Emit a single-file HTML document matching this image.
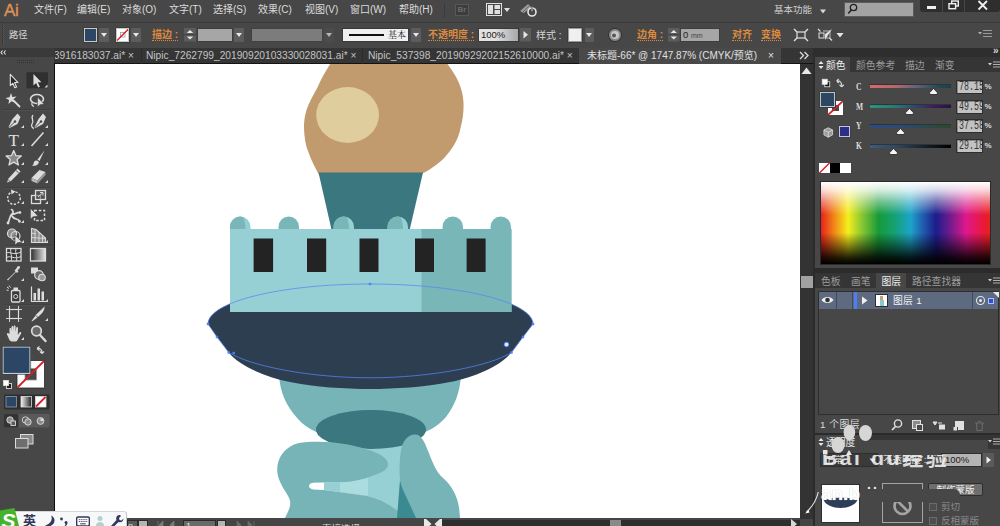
<!DOCTYPE html>
<html lang="zh-CN">
<head>
<meta charset="utf-8">
<title>Adobe Illustrator</title>
<style>
*{box-sizing:border-box;margin:0;padding:0}
html,body{width:1000px;height:526px;overflow:hidden;background:#474747}
body{position:relative;font-family:"Liberation Sans","Noto Sans CJK SC",sans-serif;font-size:12px;color:#d6d6d6}
.abs{position:absolute}
#menubar{position:absolute;left:0;top:0;width:1000px;height:22px;background:#474747}
#menubar span.m{position:absolute;top:2px;font-size:10px;line-height:16px;color:#dcdcdc;white-space:nowrap;letter-spacing:0}
#ctrl{position:absolute;left:0;top:22px;width:1000px;height:26px;background:#474747;border-top:1px solid #3a3a3a}
#ctrl .t{position:absolute;top:5px;font-size:11px;line-height:16px;white-space:nowrap;color:#d6d6d6}
#ctrl .o{color:#dd8a3e;border-bottom:1px dotted #dd8a3e;line-height:11px;top:6px;font-weight:bold}
.dd{position:absolute;background:#5c5c5c;border-radius:1px}
.dd:after{content:"";position:absolute;left:50%;top:50%;margin:-2px 0 0 -3px;border:3px solid transparent;border-top:4px solid #e6e6e6;border-bottom:0}
#tabs{position:absolute;left:0;top:48px;width:1000px;height:16px;background:#353535;border-bottom:1px solid #141414}
#tabs .tb{position:absolute;top:0;height:16px;font-size:10.2px;line-height:15px;color:#c4c4c4;white-space:nowrap;overflow:hidden}
#tools{position:absolute;left:0;top:48px;width:54px;height:478px;background:#474747}
#canvas{position:absolute;left:55px;top:64px;width:745px;height:454px;background:#fff;overflow:hidden}
#vscroll{position:absolute;left:800px;top:64px;width:14px;height:462px;background:#333}
#status{position:absolute;left:54px;top:518.500px;width:760px;height:8px;background:#454545}
#dock{position:absolute;left:813px;top:48px;width:187px;height:478px;background:#2b2b2b}
.panel{position:absolute;left:2px;width:185px;background:#474747}

#dock .tab{position:absolute;top:0;height:15px;overflow:hidden;font-size:9.800px;line-height:17.500px;color:#9c9c9c;white-space:nowrap}
#dock .tab.on{color:#f0f0f0;background:#474747}
.lbl{position:absolute;font-family:"Liberation Serif","Noto Serif CJK SC",serif;font-weight:bold;font-size:10.500px;line-height:12px;color:#dcdcdc;transform:scaleX(.720);transform-origin:0 0}
.sl{position:absolute;left:55px;width:81px;height:4px;border:1px solid #333;border-width:1px 0 0 0}
.th{position:absolute;width:9px;height:7px}
.vf{position:absolute;left:140.500px;width:27px;height:14px;background:#c2c2c2;border:1px solid #2e2e2e;box-shadow:inset 1px 1px 0 #8a8a8a;overflow:hidden;font-family:"Liberation Mono","Noto Sans CJK SC",monospace;font-size:10px;line-height:12px;color:#333;padding-left:2px;white-space:nowrap;letter-spacing:-0.600px}
.pc{position:absolute;left:169.500px;font-size:8px;line-height:12px;color:#dcdcdc;font-weight:bold}
.vf span{display:inline-block;font-size:13px;line-height:12px;transform:scaleX(.640);transform-origin:0 50%;letter-spacing:0}
</style>
</head>
<body>
<div id="menubar">
<span class="abs" style="left:4px;top:0px;font-size:17px;line-height:22px;color:#de9058;-webkit-text-stroke:0.4px #de9058;letter-spacing:-0.3px">Ai</span>
<span class="m" style="left:34px">文件(F)</span>
<span class="m" style="left:77px">编辑(E)</span>
<span class="m" style="left:122px">对象(O)</span>
<span class="m" style="left:169px">文字(T)</span>
<span class="m" style="left:213px">选择(S)</span>
<span class="m" style="left:258px">效果(C)</span>
<span class="m" style="left:305px">视图(V)</span>
<span class="m" style="left:350px">窗口(W)</span>
<span class="m" style="left:399px">帮助(H)</span>
<div class="abs" style="left:444px;top:3px;width:1px;height:15px;background:#3a3a3a"></div>
<div class="abs" style="left:455px;top:4px;width:14px;height:12px;background:#3c3c3c;border:1px solid #585858;font-size:8px;line-height:10px;color:#6a6a6a;text-align:center;font-weight:bold">Br</div>
<svg class="abs" style="left:486px;top:3px" width="26" height="14" viewBox="0 0 26 14"><rect x="0.5" y="0.5" width="15" height="12" fill="none" stroke="#e0e0e0"/><rect x="2" y="2" width="5" height="9" fill="#e0e0e0"/><rect x="8.500" y="2" width="5.500" height="4" fill="#e0e0e0"/><rect x="8.500" y="7" width="5.500" height="4" fill="#e0e0e0"/><path d="M18,5 L24,5 L21,9 Z" fill="#e0e0e0"/></svg>
<svg class="abs" style="left:519px;top:2px" width="20" height="16" viewBox="0 0 20 16"><path d="M1,9 L9,2 L12,5 L5,11 Z" fill="#9a9a9a"/><path d="M3,11 L10,4" stroke="#6a6a6a" stroke-width="1"/><circle cx="13" cy="10" r="4" fill="none" stroke="#e6e6e6" stroke-width="1.600"/><rect x="12.200" y="4.500" width="1.600" height="5" fill="#e6e6e6" stroke="#474747" stroke-width="0.600"/></svg>
<span class="m" style="left:774px;color:#d0d0d0;font-size:9.5px">基本功能</span>
<svg class="abs" style="left:819px;top:9px" width="8" height="5" viewBox="0 0 8 5"><path d="M1,0.500 L7,0.500 L4,4.500 Z" fill="#d8d8d8"/></svg>
<div class="abs" style="left:844px;top:2px;width:70px;height:15px;background:#a3a3a3;border:1px solid #5c5c5c"></div>
<svg class="abs" style="left:847px;top:3px" width="12" height="12" viewBox="0 0 12 12"><circle cx="6.500" cy="4.500" r="3.200" fill="none" stroke="#222" stroke-width="1.300"/><path d="M4.300,7 L1.200,10.500" stroke="#222" stroke-width="1.600"/></svg>
<div class="abs" style="left:920px;top:0;width:80px;height:12px;background:#2e2e2e;border-radius:0 0 3px 3px"></div>
<div class="abs" style="left:942px;top:0;width:1px;height:12px;background:#474747"></div>
<div class="abs" style="left:964px;top:0;width:1px;height:12px;background:#474747"></div>
<div class="abs" style="left:927px;top:6px;width:9px;height:3px;background:#f0f0f0"></div>
<svg class="abs" style="left:948px;top:0" width="12" height="11" viewBox="0 0 12 11"><rect x="3.700" y="1" width="6.600" height="5" fill="none" stroke="#f0f0f0" stroke-width="1.400"/><rect x="1" y="3.700" width="6.600" height="5" fill="#2e2e2e" stroke="#f0f0f0" stroke-width="1.400"/></svg>
<svg class="abs" style="left:977px;top:0" width="12" height="11" viewBox="0 0 12 11"><path d="M1.500,1 L10,9.500 M10,1 L1.500,9.500" stroke="#f0f0f0" stroke-width="1.800"/></svg>
</div>
<div id="ctrl">
<div class="abs" style="left:2px;top:3px;width:2px;height:19px;border-left:1px dotted #2e2e2e;border-right:1px dotted #5a5a5a"></div>
<span class="t" style="left:9px;font-size:9.300px;top:3.500px">路径</span>
<div class="abs" style="left:83.500px;top:5px;width:13.500px;height:13.500px;background:#2c4766;border:1px solid #c8c8c8;box-shadow:0 0 0 0.5px #333"></div>
<div class="dd" style="left:99px;top:5px;width:9.500px;height:13.500px"></div>
<div class="abs" style="left:115.500px;top:5px;width:13.500px;height:13.500px;background:#fff;border:1px solid #c8c8c8;box-shadow:0 0 0 0.5px #333;overflow:hidden"><svg width="11.500" height="11.500" viewBox="0 0 13 13" style="display:block"><rect x="4" y="4" width="5" height="5" fill="none" stroke="#9aa" stroke-width="1"/><path d="M0,13 L13,0" stroke="#d8202a" stroke-width="1.600"/></svg></div>
<div class="dd" style="left:131px;top:5px;width:10px;height:13.500px"></div>
<span class="t o" style="left:152px;font-size:10px">描边 :</span>
<svg class="abs" style="left:184px;top:5px" width="12" height="13.500" viewBox="0 0 11 16" preserveAspectRatio="none"><rect width="11" height="16" fill="#5c5c5c"/><path d="M0,8 H11" stroke="#3a3a3a" stroke-width="1"/><path d="M2.500,6 L8.500,6 L5.500,2.500 Z M2.500,10 L8.500,10 L5.500,13.500 Z" fill="#e6e6e6"/></svg>
<div class="abs" style="left:196.500px;top:5px;width:36.500px;height:13.500px;background:#a6a6a6;border:1px solid #3e3e3e"></div>
<div class="dd" style="left:233.500px;top:5px;width:10px;height:13.500px"></div>
<div class="abs" style="left:250.500px;top:5px;width:72.500px;height:13.500px;background:#7c7c7c;border:1px solid #424242"></div>
<div class="dd" style="left:324px;top:5px;width:10px;height:13.500px;background:#4e4e4e;opacity:.7"></div>
<div class="abs" style="left:342px;top:5px;width:67px;height:13.500px;background:#f0f0f0;border:1px solid #3a3a3a"><div class="abs" style="left:6px;top:5px;width:35px;height:2px;background:#111"></div><span class="abs" style="left:45px;top:-1.500px;font-size:9px;line-height:14px;color:#222;font-family:'Liberation Serif','Noto Serif CJK SC',serif">基本</span></div>
<div class="dd" style="left:411px;top:5px;width:10px;height:13.500px"></div>
<span class="t o" style="left:428px;font-size:10px">不透明度 :</span>
<div class="abs" style="left:478px;top:5px;width:41px;height:13.500px;background:linear-gradient(90deg,#e2e2e2 40%,#a8a8a8);border:1px solid #3a3a3a;font-size:9.5px;line-height:11px;color:#222;padding-left:2px">100%</div>
<svg class="abs" style="left:520px;top:5px" width="11" height="13.500" viewBox="0 0 11 13" preserveAspectRatio="none"><rect width="11" height="13" fill="#5c5c5c"/><path d="M3.500,3 L8,6.500 L3.500,10 Z" fill="#e6e6e6"/></svg>
<span class="t" style="left:536px;font-size:10px">样式 :</span>
<div class="abs" style="left:568px;top:5px;width:14px;height:13.500px;background:#efefef;border:1px solid #9a9a9a;box-shadow:0 0 0 0.5px #333"></div>
<div class="dd" style="left:584.500px;top:5px;width:9.500px;height:13.500px"></div>
<svg class="abs" style="left:607px;top:4px" width="16" height="16" viewBox="0 0 16 16"><circle cx="8" cy="8" r="6.500" fill="#8a8a8a" stroke="#2e2e2e" stroke-width="1"/><circle cx="8" cy="8" r="4" fill="#c8c8c8"/><circle cx="7" cy="8.500" r="2" fill="#555"/></svg>
<span class="t o" style="left:637px;font-size:10px">边角 :</span>
<svg class="abs" style="left:668px;top:5px" width="11.500" height="13.500" viewBox="0 0 11 16" preserveAspectRatio="none"><rect width="11" height="16" fill="#5c5c5c"/><path d="M0,8 H11" stroke="#3a3a3a" stroke-width="1"/><path d="M2.500,6 L8.500,6 L5.500,2.500 Z M2.500,10 L8.500,10 L5.500,13.500 Z" fill="#e6e6e6"/></svg>
<div class="abs" style="left:680px;top:5px;width:40px;height:13.500px;background:#a6a6a6;border:1px solid #3e3e3e;font-size:9.500px;line-height:11px;color:#222;padding-left:2px">0 <span style="font-size:7px;color:#444">mm</span></div>
<span class="t o" style="left:732px;font-size:10px">对齐</span>
<span class="t o" style="left:761px;font-size:10px">变换</span>
<svg class="abs" style="left:793px;top:5px" width="16" height="14" viewBox="0 0 16 14"><rect x="4" y="4" width="8" height="6" fill="none" stroke="#e0e0e0" stroke-width="1.200"/><path d="M1,1 L4,4 M15,1 L12,4 M1,13 L4,10 M15,13 L12,10" stroke="#e0e0e0" stroke-width="1.400"/></svg>
<svg class="abs" style="left:817px;top:5px" width="28" height="14" viewBox="0 0 28 14"><rect x="2" y="5" width="5" height="5" fill="none" stroke="#e0e0e0" stroke-width="1"/><path d="M6,3 L13,3 L13,10 L9,10" fill="none" stroke="#bdbdbd" stroke-width="1"/><path d="M15,1 L8,12 L8,6 Z" fill="#e0e0e0"/><path d="M1,1 L3.500,3.500 M15,12.500 L12.500,10" stroke="#e0e0e0" stroke-width="1.200"/><path d="M19.500,5 L26.500,5 L23,9.500 Z" fill="#e6e6e6"/></svg>
<svg class="abs" style="left:978px;top:6px" width="14" height="10" viewBox="0 0 14 10"><path d="M0,3 L4,3 L2,5.500 Z" fill="#b0b0b0"/><path d="M5,1.500 H14 M5,4.500 H14 M5,7.500 H14" stroke="#9a9a9a" stroke-width="1"/></svg>
</div>
<div id="tabs">
<div class="abs" style="left:0;top:0;width:54px;height:16px;background:#3a3a3a"></div>
<span class="abs" style="left:2px;top:1px;font-size:8px;line-height:8px;color:#d0d0d0;letter-spacing:-1.5px;font-weight:bold">‹‹</span>
<div class="abs" style="left:18px;top:10px;width:18px;height:3px;border-top:1px dotted #6a6a6a;border-bottom:1px dotted #6a6a6a"></div>
<div class="tb" style="left:55px;width:79px;direction:rtl"><span style="direction:ltr;unicode-bidi:bidi-override;float:right">3916183037.ai* ×</span></div>
<div class="abs" style="left:141px;top:1px;width:1px;height:15px;background:#2a2a2a"></div>
<div class="tb" style="left:146px;width:215px"><span>Nipic_7262799_20190920103330028031.ai* ×</span></div>
<div class="abs" style="left:362px;top:1px;width:1px;height:15px;background:#2a2a2a"></div>
<div class="tb" style="left:368px;width:210px"><span>Nipic_537398_20190929202152610000.ai* ×</span></div>
<div class="abs" style="left:579px;top:0;width:202px;height:16px;background:#494949"></div>
<div class="tb" style="left:587px;width:175px;color:#e0e0e0;font-size:10px"><span>未标题-66* @ 1747.87% (CMYK/预览)</span></div>
<div class="tb" style="left:768px;width:10px;color:#e0e0e0">×</div>
<svg class="abs" style="left:799px;top:3px" width="10" height="9" viewBox="0 0 10 9"><path d="M1,1 L4.500,4.500 L1,8 M5.500,1 L9,4.500 L5.500,8" fill="none" stroke="#dcdcdc" stroke-width="1.300"/></svg>
</div>
<div id="tools">
<svg width="54" height="478" viewBox="0 48 54 478" style="position:absolute;left:0;top:0">
<rect x="0" y="48" width="54" height="9" fill="#3a3a3a"/>

<path d="M2.500,50.500 L1,52.500 L2.500,54.500 M5.500,50.500 L4,52.500 L5.500,54.500" fill="none" stroke="#e0e0e0" stroke-width="1.100"/>
<path d="M17,60.500 H34 M17,62.500 H34" stroke="#333" stroke-width="1" stroke-dasharray="1 1"/>
<g stroke-width="1">
<path d="M3,109.500 H51 M3,187.500 H51 M3,245.500 H51 M3,304.500 H51" stroke="#3f3f3f"/>
<path d="M3,110.500 H51 M3,188.500 H51 M3,246.500 H51 M3,305.500 H51" stroke="#4f4f4f"/>
</g>
<!-- row1 -->
<rect x="26.500" y="72.300" width="21.500" height="16" rx="1" fill="#303030"/>
<path transform="translate(14,81) scale(.86) translate(-14.300,-81.200)" d="M10,73.500 L10,86.500 L13,83.800 L15.300,89 L17.300,88.100 L15,83 L19,83 Z" fill="#2a2a2a" stroke="#e0e0e0" stroke-width="1.300" stroke-linejoin="round"/>
<path transform="translate(37.300,80.700) scale(.86) translate(-38,-81.400)" d="M33.500,73.500 L33.500,87 L36.600,84 L39,89.300 L41,88.400 L38.600,83.200 L42.800,83.200 Z" fill="#dedede"/>
<g fill="#d8d8d8">
<path d="M47.500,84.500 L47.500,87.500 L44.500,87.500 Z"/>
<path d="M48,104 L48,107 L45,107 Z" opacity="0"/>
<path d="M24,125 L24,128 L21,128 Z"/><path d="M48,125 L48,128 L45,128 Z"/>
<path d="M24,143 L24,146 L21,146 Z"/><path d="M48,143 L48,146 L45,146 Z"/>
<path d="M24,162 L24,165 L21,165 Z"/><path d="M48,162 L48,165 L45,165 Z"/>
<path d="M24,180 L24,183 L21,183 Z"/><path d="M48,180 L48,183 L45,183 Z"/>
<path d="M24,201 L24,204 L21,204 Z"/><path d="M48,201 L48,204 L45,204 Z"/>
<path d="M24,220 L24,223 L21,223 Z"/>
<path d="M24,240 L24,243 L21,243 Z"/><path d="M48,240 L48,243 L45,243 Z"/>
<path d="M24,278 L24,281 L21,281 Z"/>
<path d="M24,299 L24,302 L21,302 Z"/><path d="M48,299 L48,302 L45,302 Z"/>
<path d="M48,318 L48,321 L45,321 Z"/>
<path d="M24,337 L24,340 L21,340 Z"/>
</g>
<!-- row2 magic wand / lasso -->
<path d="M11,93 L12.300,97 L16.500,96.500 L13.500,99.300 L15.500,103 L11.500,101.200 L8.500,104 L9,100 L5.500,98 L9.500,97.200 Z" fill="#dcdcdc"/>
<path d="M13.500,100.500 L20,107" stroke="#dcdcdc" stroke-width="1.800"/>
<ellipse cx="37" cy="99" rx="6.500" ry="4.500" fill="none" stroke="#dcdcdc" stroke-width="1.600"/>
<path d="M32.500,102 C31,104 32,106 34,106.500" fill="none" stroke="#dcdcdc" stroke-width="1.200"/>
<path d="M37.500,97 L37.500,107 L40,104.800 L44,104 Z" fill="#dcdcdc" stroke="#474747" stroke-width="0.600"/>
<!-- row3 pen / curvature -->
<path d="M17.500,113.500 L20.500,117 L17.500,124 L9.500,128 L8.500,127 L12.500,119 Z" fill="#dcdcdc"/>
<path d="M9,127.500 L14.500,122" stroke="#474747" stroke-width="1"/>
<circle cx="15" cy="121.500" r="1.200" fill="#474747"/>
<path d="M43,113.500 L46,117 L43,124 L35.500,128 L34.500,127 L38.500,119 Z" fill="#dcdcdc"/>
<path d="M35,127.500 L40.500,122" stroke="#474747" stroke-width="1"/>
<circle cx="41" cy="121.500" r="1.200" fill="#474747"/>
<path d="M33,115 C30,118 35,121 32,124 C31,126 32,128 34,128.500" fill="none" stroke="#dcdcdc" stroke-width="1.300"/>
<!-- row4 T / line -->
<text x="13.700" y="145.500" font-family="'Liberation Serif',serif" font-size="17" fill="#e0e0e0" text-anchor="middle">T</text>
<path d="M31.500,146 L43.500,132.500" stroke="#dcdcdc" stroke-width="1.600"/>
<!-- row5 star / brush -->
<path d="M13.700,150.500 L15.800,155.600 L21.300,156 L17.100,159.600 L18.400,165 L13.700,162.100 L9,165 L10.300,159.600 L6.100,156 L11.600,155.600 Z" fill="#8a8a8a" stroke="#dcdcdc" stroke-width="1.300" stroke-linejoin="round"/>
<path d="M44.500,150.500 L37.500,159.500 L39.500,161 Z" fill="#dcdcdc"/>
<path d="M37,160.500 C35,160 33.500,162 33.500,164 C33,165 32,165.500 31.500,165.500 C34,166.500 38.500,165.500 39,162 Z" fill="#dcdcdc"/>
<!-- row6 pencil / eraser -->
<path d="M17.500,168.500 L20.500,171.500 L11,181 L7,182.500 L8.500,178.500 Z" fill="#dcdcdc"/>
<path d="M15.800,170.200 L18.800,173.200" stroke="#474747" stroke-width="0.900"/>
<path d="M8,179.500 L10,181.500" stroke="#474747" stroke-width="0.800"/>
<path d="M31.500,178 L39.500,170 L45.500,172 L37.500,180.500 Z" fill="#dcdcdc"/>
<path d="M31.500,178 L37.500,180.500 L37.500,183.500 L31.500,181 Z" fill="#b8b8b8"/>
<path d="M37.500,180.500 L45.500,172 L45.500,175 L37.500,183.500 Z" fill="#9a9a9a"/>
<!-- row7 rotate / scale -->
<circle cx="14" cy="198" r="6.300" fill="none" stroke="#dcdcdc" stroke-width="1.400" stroke-dasharray="2.200 1.600"/>
<path d="M11,189.500 L15.500,191.500 L11.500,194.500 Z" fill="#dcdcdc"/>
<rect x="31.500" y="195.500" width="9" height="8" fill="none" stroke="#dcdcdc" stroke-width="1.300"/>
<rect x="35.500" y="190.500" width="10" height="9" fill="#5a5a5a" fill-opacity="0.600" stroke="#dcdcdc" stroke-width="1.300"/>
<path d="M38,197 L43,192.500 M43,192.500 L40,192.500 M43,192.500 L43,195.500" stroke="#dcdcdc" stroke-width="1"/>
<!-- row8 width / free transform -->
<path d="M8,223 C10,220 9,216 12,214 C14,212.500 13,210 11.500,209.500 M12,214 C15,215 17,212 20,212.500 M12,216 C14,220 18,218 19.500,221" fill="none" stroke="#dcdcdc" stroke-width="1.700" stroke-linecap="round"/>
<circle cx="8" cy="223" r="1.400" fill="#dcdcdc"/><circle cx="20" cy="212.500" r="1.300" fill="#dcdcdc"/><circle cx="19.500" cy="221.500" r="1.300" fill="#dcdcdc"/>
<rect x="34.500" y="210.500" width="10" height="10" fill="none" stroke="#dcdcdc" stroke-width="1.500" stroke-dasharray="2.500 1.800"/>
<path d="M30.500,208.500 L30.500,219 L33,216.800 L38,216 Z" fill="#dcdcdc" stroke="#474747" stroke-width="0.500"/>
<!-- row9 shape builder / perspective grid -->
<circle cx="12" cy="233.500" r="4.500" fill="#8a8a8a" stroke="#dcdcdc" stroke-width="1.200"/>
<circle cx="15.500" cy="236" r="4.500" fill="none" stroke="#dcdcdc" stroke-width="1.200"/>
<path d="M15,235 L15,245 L17.500,242.800 L22,242 Z" fill="#dcdcdc" stroke="#474747" stroke-width="0.600"/>
<path d="M31.500,228.500 L31.500,242.500 L45.500,242.500 L45.500,238 L36,229.500 Z" fill="#8a8a8a" stroke="#dcdcdc" stroke-width="1.100"/>
<path d="M35,229 L35,242.500 M39,232 L39,242.500 M42.500,235 L42.500,242.500 M31.500,233 L36,234 M31.500,237.500 L45,238.500" stroke="#dcdcdc" stroke-width="0.900"/>
<!-- row10 mesh / gradient -->
<rect x="6.500" y="248.500" width="14.500" height="12.500" fill="#3a3a3a" stroke="#dcdcdc" stroke-width="1.300"/>
<path d="M6.500,253 C10,251 13,256 21,252 M6.500,257.500 C11,255 14,260 21,256.500 M11,248.500 C9.500,253 13,256 11,261 M16,248.500 C14.500,253 18,256 16.500,261" fill="none" stroke="#dcdcdc" stroke-width="1"/>
<defs><linearGradient id="tg" x1="0" y1="0" x2="1" y2="0"><stop offset="0" stop-color="#2a2a2a"/><stop offset="1" stop-color="#e6e6e6"/></linearGradient>
<linearGradient id="tg2" x1="0" y1="0" x2="1" y2="0"><stop offset="0" stop-color="#f4f4f4"/><stop offset="1" stop-color="#222"/></linearGradient></defs>
<rect x="30.500" y="248.500" width="15" height="12.500" fill="url(#tg)" stroke="#dcdcdc" stroke-width="1.300"/>
<!-- row11 eyedropper / blend -->
<path d="M17.500,266.500 C19,265 21,267 19.500,268.500 L17.500,270.500 L18.500,271.500 L17,273 L16,272 L10,278 L8,280.500 L7,279.500 L9.500,277.500 L15.500,271.500 L14.500,270.500 L16,269 Z" fill="#dcdcdc"/>
<rect x="31" y="267.500" width="7" height="6" fill="#dcdcdc"/>
<circle cx="39" cy="275" r="4.300" fill="#6a6a6a" stroke="#dcdcdc" stroke-width="1.200"/>
<circle cx="42" cy="277.500" r="3.300" fill="#9a9a9a" stroke="#dcdcdc" stroke-width="1.100"/>
<!-- row12 symbol sprayer / graph -->
<rect x="11.500" y="290.500" width="8.500" height="11.500" rx="1.200" fill="#3a3a3a" stroke="#dcdcdc" stroke-width="1.300"/>
<rect x="13.500" y="287.500" width="4.500" height="3" fill="#dcdcdc"/>
<circle cx="15.700" cy="296.500" r="2" fill="none" stroke="#dcdcdc" stroke-width="1"/>
<path d="M7,287 L9,288.500 M6.500,290 L8.500,290.500 M9,285.500 L10.500,287.500" stroke="#dcdcdc" stroke-width="1"/>
<path d="M31.500,286.500 L31.500,301.500 L46,301.500" fill="none" stroke="#dcdcdc" stroke-width="1.200"/>
<rect x="33.500" y="293" width="2.500" height="7.500" fill="#dcdcdc"/><rect x="37.500" y="288.500" width="2.500" height="12" fill="#dcdcdc"/><rect x="41.500" y="291.500" width="2.500" height="9" fill="#dcdcdc"/>
<!-- row13 artboard / slice -->
<rect x="9.500" y="309.500" width="9" height="9" fill="none" stroke="#dcdcdc" stroke-width="1.200"/>
<path d="M6,309.500 H22 M6,318.500 H22 M9.500,306 V322 M18.500,306 V322" stroke="#dcdcdc" stroke-width="0.900"/>
<path d="M44.500,306.500 C45,310 42,314 38,317 L35.500,315 C39,312 42,309 44.500,306.500 Z" fill="#dcdcdc"/>
<path d="M35.500,315.500 L37.500,317.500 L32,321.500 L31.500,321 Z" fill="#dcdcdc"/>
<!-- row14 hand / zoom -->
<path d="M9.500,334 L9.500,329 C9.500,327.500 11.300,327.500 11.300,329 L11.500,332 L11.500,327 C11.500,325.500 13.300,325.500 13.300,327 L13.500,331.500 L13.700,326.500 C13.700,325 15.500,325 15.500,326.500 L15.700,332 L16.200,328 C16.300,326.600 18,326.800 18,328.300 L17.800,335 L19.500,332.500 C20.300,331.500 21.800,332.300 21,333.700 L17.500,340 C17,341 16,341.500 15,341.500 L12,341.500 C10.500,341.500 9.500,340.500 9,339 L7,334.500 C6.500,333 8.200,332.300 8.800,333.500 Z" fill="#dcdcdc"/>
<circle cx="36.500" cy="331" r="4.800" fill="#6a6a6a" stroke="#dcdcdc" stroke-width="1.700"/>
<path d="M40,335 L45.500,341" stroke="#dcdcdc" stroke-width="2.400" stroke-linecap="round"/>
<!-- fill / stroke -->
<rect x="17" y="360.500" width="27.500" height="27.500" fill="#fff" stroke="#2a2a2a" stroke-width="0.800"/>
<rect x="25" y="368.500" width="11.500" height="11.500" fill="#474747" stroke="#9a9a9a" stroke-width="0.800"/>
<path d="M17.500,387.500 L44,361" stroke="#d8202a" stroke-width="1.800"/>
<rect x="3" y="347" width="27" height="26.500" fill="#2c4766" stroke="#c4ccd4" stroke-width="1.200"/>
<rect x="2.200" y="346.200" width="28.600" height="28.100" fill="none" stroke="#333" stroke-width="0.600"/>
<path d="M37,348.500 C40,348 42,349.500 42,352.500 M37,348.500 L39.500,346.500 M37,348.500 L39.500,350.500 M42,353.500 L40,351.500 M42,353.500 L44,351.500" fill="none" stroke="#dcdcdc" stroke-width="1.200"/>
<rect x="6.500" y="383.500" width="5" height="5" fill="#222" stroke="#dcdcdc" stroke-width="0.900"/>
<rect x="3.500" y="380.500" width="5" height="5" fill="#fff" stroke="#dcdcdc" stroke-width="0.900"/>
<!-- color mode buttons -->
<rect x="4" y="394.500" width="45.500" height="15" rx="1.500" fill="#2e2e2e"/>
<rect x="6" y="396.500" width="10.500" height="10.500" fill="#2c4766" stroke="#8a9aac" stroke-width="0.800"/>
<rect x="21" y="396.500" width="10.500" height="10.500" fill="url(#tg2)" stroke="#dcdcdc" stroke-width="0.800"/>
<rect x="35.500" y="396.500" width="10.500" height="10.500" fill="#fff" stroke="#dcdcdc" stroke-width="0.800"/>
<path d="M36,406.500 L45.500,397" stroke="#d8202a" stroke-width="1.800"/>
<!-- draw modes -->
<rect x="4" y="414" width="45.500" height="13.500" rx="1.500" fill="#5a5a5a"/>
<rect x="4" y="414" width="14.500" height="13.500" rx="1.500" fill="#333"/>
<circle cx="10" cy="420" r="3.200" fill="#8a8a8a" stroke="#dcdcdc" stroke-width="0.900"/><rect x="11" y="421" width="4.500" height="4.500" fill="#5a5a5a" stroke="#dcdcdc" stroke-width="0.900"/>
<circle cx="25.500" cy="420" r="3.200" fill="none" stroke="#dcdcdc" stroke-width="0.900"/><circle cx="28" cy="422" r="3.200" fill="#8a8a8a" stroke="#dcdcdc" stroke-width="0.900"/>
<circle cx="40.500" cy="421" r="3.400" fill="#8a8a8a" stroke="#dcdcdc" stroke-width="0.900"/><path d="M40.500,421 L40.500,418 A3,3 0 0 1 43.500,421 Z" fill="#dcdcdc"/>
<!-- screen mode -->
<rect x="20.500" y="434.500" width="12.500" height="9.500" fill="#8a8a8a" stroke="#dcdcdc" stroke-width="1"/>
<rect x="15.500" y="438.500" width="12.500" height="9.500" fill="#6e6e6e" stroke="#dcdcdc" stroke-width="1"/>
</svg>
</div>
<div class="abs" style="left:53.500px;top:64px;width:2px;height:455px;background:#0c0c0c"></div>
<div id="canvas">
<svg width="745" height="454" viewBox="55 64 745 454" style="position:absolute;left:0;top:0">
<!-- flame -->
<path d="M334.500,58 C329,65 322,77 317.400,87.400 C313,96 309,102 306.500,110 C304.500,117 303.800,123 304,128 C304.300,138 306,146 308,151 C311,160 315,167 318.5,174 L421,174 C427,171.500 432,168 436,165 C442,161 446,156 450,151 C456,143 459,136 460.500,128 C463,119 464,110 463.400,101 C463,94 461,88 459,83 C456,76 452,70 446,62 L444,58 Z" fill="#c19b6d"/>
<ellipse cx="347.600" cy="115" rx="31.400" ry="28" fill="#e0cd9e"/>
<!-- torch cup -->
<path d="M318.500,172.500 L423,172.500 L409.600,230 L331.600,230 Z" fill="#3a777f"/>
<!-- lower bowl -->
<path d="M279,375 C280,392 286,406 298,419 C306,428 316,433 330,436 L415,436 C428,432 438,426 446,417 C455,405 460,392 461,375 Z" fill="#76b4b7"/>
<!-- dish -->
<path d="M208,324 C208,302 280,284 370,284 C460,284 533,302 533,324 L523,337 L511,353 C500,366 475,377 450,382 C425,387 395,389 370,389 C345,389 315,387 290,382 C265,377 240,366 229,353 L217,337 Z" fill="#2c3e50"/>
<!-- merlons -->
<path d="M230,240 L230,227 a10.250,10.500 0 0 1 20.500,0 L250.5,240 Z" fill="#96d0d4"/>
<path d="M230,240 L230,227 a10.250,10.500 0 0 1 13,-10 C245,220 246,228 246,240 Z" fill="#78b6b7"/>
<path d="M278.5,240 L278.5,227 a10.250,10.500 0 0 1 20.500,0 L299,240 Z" fill="#78b6b7"/>
<path d="M333.5,240 L333.5,227 a10.250,10.500 0 0 1 20.500,0 L354,240 Z" fill="#96d0d4"/>
<path d="M333.5,240 L333.5,227 a10.250,10.500 0 0 1 13,-10 C348.5,220 349.5,228 349.5,240 Z" fill="#78b6b7"/>
<path d="M387.5,240 L387.5,227 a10.250,10.500 0 0 1 20.500,0 L408,240 Z" fill="#96d0d4"/>
<path d="M387.5,240 L387.5,227 a10.250,10.500 0 0 1 13,-10 C402.5,220 403.5,228 403.5,240 Z" fill="#78b6b7"/>
<path d="M442.5,240 L442.5,227 a10.250,10.500 0 0 1 20.500,0 L463,240 Z" fill="#78b6b7"/>
<path d="M490.5,240 L490.5,227 a10.250,10.500 0 0 1 20.500,0 L511,240 Z" fill="#78b6b7"/>
<!-- castle body -->
<rect x="230" y="229" width="281.500" height="83" fill="#96d0d4"/>
<rect x="421.500" y="229" width="90" height="83" fill="#78b6b7"/>
<g fill="#232323">
<rect x="253.600" y="238.500" width="19.500" height="33.500"/>
<rect x="307" y="238.500" width="19.200" height="33.500"/>
<rect x="359.500" y="238.500" width="19" height="33.500"/>
<rect x="415" y="238.500" width="19" height="33.500"/>
<rect x="466.600" y="238.500" width="19" height="33.500"/>
</g>
<!-- stem -->
<path d="M366,445 L403,445 L400,518 L384,518 Z" fill="#96d0d4"/>
<!-- horn -->
<path d="M309,486 C309,483.500 312,482.500 316,482.500 L345,482 C356,481 364,478 370,470 L402,470 L398,511 C388,504 378,498 368,496 L324,490 L316,489.800 C312,489.800 309,488.500 309,486 Z" fill="#96d0d4"/>
<path d="M340,482.200 L345,482 C354,481.300 362,479 368,473 L368,496 L340,492.200 Z" fill="#abdcde"/>
<path d="M309,486 C309,483.500 312,482.500 316,482.500 L324,482.400 L324,490 L316,489.800 C312,489.800 309,488.500 309,486 Z" fill="#fff"/>
<!-- dark teal ellipse -->
<ellipse cx="371" cy="429.500" rx="55" ry="19.500" fill="#3a777f"/>
<!-- hand/finger -->
<path d="M285,518 C287,514 290.300,508 290.300,503 C290.300,499 288,496 286,492.500 C282,486 277,478 277.200,469 C277.500,458 284,449 294,444.500 C300,442.300 308,441.800 318,441.800 C340,442 358,446 372,451 C382,455 388,459 388,464 C388,469 383,472 377,474 C368,478 356,481.500 345,482 L316,482.500 C312,482.500 309,483.500 309,486 C309,488.500 312,489.800 316,489.800 L324,490 L368,496 C378,498 388,504 398,511 L402,518 Z" fill="#76b4b7"/>
<!-- shade -->
<path d="M400,480 L417,518 L397,518 L398,505 Z" fill="#3b8a92"/>
<!-- thumb -->
<path d="M414,434.500 C408,435 403,441 401.500,448 C400,455 399.500,466 399.500,472 C399.500,480 401,486 404,492 L416,518 L460,518 C459.500,510 459,503 455,494 C452,488 449,483 443,478 C436,472 432,461 428.500,452 C426,446 424,439.500 419,435.500 C417.500,434.600 416,434.300 414,434.500 Z" fill="#76b4b7"/>
<!-- selection outline -->
<g fill="none" stroke="#5585f5" stroke-width="0.75">
<path d="M208,324 C208,302 280,284 370,284 C460,284 533,302 533,324 L523,337 L511.500,352.500 C490,366 430,377.800 370,377.800 C310,377.800 250,366 229,352.500 L217,337 Z"/>
</g>
<g fill="#4f80ff">
<rect x="368.800" y="282.800" width="2.400" height="2.400"/>
<rect x="206.800" y="322.800" width="2.400" height="2.400"/>
<rect x="531.800" y="322.800" width="2.400" height="2.400"/>
<rect x="215.800" y="335.800" width="2.400" height="2.400"/>
<rect x="521.800" y="335.800" width="2.400" height="2.400"/>
<rect x="227.500" y="351.300" width="2.400" height="2.400"/>
<rect x="510.300" y="351.300" width="2.400" height="2.400"/>
<rect x="232.500" y="351.800" width="2.400" height="2.400"/>
</g>
<circle cx="506.500" cy="344.500" r="2.300" fill="#dfe8ff" stroke="#4f80ff" stroke-width="0.800"/>
</svg>
</div>
<div id="vscroll">
<svg class="abs" style="left:1px;top:2px" width="11" height="9" viewBox="0 0 11 9"><path d="M0.500,8 L5.500,1.500 L10.500,8 Z" fill="#e8e8e8"/></svg>
<div class="abs" style="left:0.500px;top:212px;width:12px;height:12px;background:#a2a2a2"></div>
<div class="abs" style="left:1px;top:455px;width:12px;height:8px;background:#4c4c4c"></div>
</div>
<div id="status">
<div class="abs" style="left:73px;top:1px;width:11px;height:8px;background:#5a5a5a;border:1px solid #2a2a2a;font-size:9px;line-height:12px;color:#ddd;overflow:hidden">8</div>
<div class="abs" style="left:84px;top:1px;width:10px;height:8px;background:#b4b4b4;border:1px solid #2a2a2a"></div>
<svg class="abs" style="left:101px;top:2px" width="24" height="6" viewBox="0 0 24 6"><path d="M3,0 V6 M8,0 L4,4 L8,8 Z M19,0 L15,4 L19,8 Z" fill="#7a7a7a" stroke="#7a7a7a" stroke-width="0.800"/></svg>
<div class="abs" style="left:129px;top:1px;width:33px;height:8px;background:#6a6a6a;border:1px solid #2a2a2a;font-size:9px;line-height:11px;color:#e8e8e8;overflow:hidden;padding-left:2px">1</div>
<div class="abs" style="left:163px;top:1px;width:9px;height:8px;background:#b4b4b4;border:1px solid #2a2a2a"></div>
<svg class="abs" style="left:180px;top:2px" width="24" height="6" viewBox="0 0 24 6"><path d="M3,0 L7,4 L3,8 Z M14,0 L18,4 L14,8 Z M20,0 V6" fill="#6a6a6a" stroke="#6a6a6a" stroke-width="0.800"/></svg>
<div class="abs" style="left:268px;top:4.500px;width:40px;height:4px;overflow:hidden;font-size:9.500px;line-height:12px;color:#dcdcdc;white-space:nowrap">直接选择</div>
<svg class="abs" style="left:368px;top:0" width="22" height="8" viewBox="0 0 22 8"><path d="M2,-2 L9.500,5 L2,12 Z" fill="#e8e8e8"/><path d="M20,-2 L12.500,5 L20,12 Z" fill="#e8e8e8"/></svg>
<div class="abs" style="left:388px;top:1px;width:358px;height:7px;background:#2e2e2e"></div>
<div class="abs" style="left:556px;top:1px;width:11px;height:7px;background:#8a8a8a"></div>
<svg class="abs" style="left:734px;top:0" width="10" height="8" viewBox="0 0 10 8"><path d="M3,0 L9,5 L3,10 Z" fill="#d8d8d8"/></svg>
</div>
<div id="ime" class="abs" style="left:0;top:507px;width:127px;height:19px;overflow:hidden">
<div class="abs" style="left:0;top:4px;width:127px;height:15px;background:#f6f8fa;border-top:1px solid #d4d8dc;border-right:1px solid #c4c8cc;border-radius:0 3px 0 0"></div>
<svg class="abs" style="left:0;top:0" width="22" height="19" viewBox="0 0 22 19"><path d="M0,3.500 L14.500,1 L19,19 L0,19 Z" fill="#44b32c"/><text x="8.500" y="20.500" font-family="'Liberation Sans',sans-serif" font-size="21" font-weight="bold" font-style="italic" fill="#fff" text-anchor="middle">S</text></svg>
<span class="abs" style="left:23px;top:6px;font-size:13px;line-height:15px;color:#34385a;font-weight:bold">英</span>
<svg class="abs" style="left:42px;top:8px" width="14" height="13" viewBox="0 0 14 13"><path d="M9,0.500 C11,4 9,9 3,10.500 C7,13 13,10 12.500,5 C12.300,3 11,1.300 9,0.500 Z" fill="#34385a"/></svg>
<svg class="abs" style="left:59px;top:9px" width="10" height="12" viewBox="0 0 10 12"><circle cx="2.500" cy="3" r="1.400" fill="#34385a"/><path d="M7,5 C8.500,5 9,7 8,8.500 C7.500,9.500 6.500,10 5.500,10 C6.500,9 6.800,8 6,7.500 C5,6.500 5.800,5 7,5 Z" fill="#34385a"/></svg>
<svg class="abs" style="left:76px;top:9px" width="14" height="11" viewBox="0 0 15 11"><rect x="0.700" y="0.700" width="13.600" height="9.600" rx="1.500" fill="#fff" stroke="#34385a" stroke-width="1.500"/><path d="M3,3.500 H12 M3,5.500 H12" stroke="#34385a" stroke-width="1" stroke-dasharray="1.200 0.800"/><path d="M4.500,8 H10.500" stroke="#34385a" stroke-width="1.100"/></svg>
<svg class="abs" style="left:94px;top:8px" width="12" height="15" viewBox="0 0 12 15"><circle cx="6" cy="3.500" r="2.500" fill="#b4d0cc"/><path d="M1.500,14 C1.500,9 3,7 6,7 C9,7 10.500,9 10.500,14 Z" fill="#b4d0cc"/></svg>
<svg class="abs" style="left:110px;top:7px" width="15" height="15" viewBox="0 0 15 15"><path d="M9.500,1 C7,1 5.500,3.500 6.500,6 L1,12 C0.500,13.500 2,14.500 3,13.500 L8.500,8 C11,9 13.500,7.500 13.500,4.500 L11.500,6.500 L9.500,6 L9,4 L11,2 C10.500,1.300 10,1 9.500,1 Z" fill="#34385a"/></svg>
</div>
<div id="dock">
<div class="abs" style="left:0;top:0;width:187px;height:9px;background:#2e2e2e"></div>
<span class="abs" style="left:180px;top:-2px;font-size:10px;line-height:10px;color:#d8d8d8;letter-spacing:-1px;font-weight:bold">››</span>
<!-- color panel -->
<div class="panel" style="top:9px;height:211px">
 <div class="abs" style="left:0;top:0;width:185px;height:15px;background:#353535"></div>
 <div class="tab on" style="left:0;width:35px;padding-left:11px">颜色</div>
 <svg class="abs" style="left:3px;top:3px" width="6" height="10" viewBox="0 0 6 10"><path d="M0.500,4 L3,1 L5.500,4 Z M0.500,6 L3,9 L5.500,6 Z" fill="#e8e8e8"/></svg>
 <div class="tab" style="left:41px">颜色参考</div>
 <div class="tab" style="left:90px">描边</div>
 <div class="tab" style="left:120px">渐变</div>
 <svg class="abs" style="left:173px;top:4px" width="12" height="9" viewBox="0 0 12 9"><path d="M0,2 L4,2 L2,4.500 Z" fill="#d0d0d0"/><path d="M5,1 H12 M5,3.500 H12 M5,6 H12" stroke="#b0b0b0" stroke-width="1.200"/></svg>
 <!-- mini icons -->
 <svg class="abs" style="left:5.500px;top:21px" width="10" height="10" viewBox="0 0 12 12"><rect x="4.500" y="4.500" width="6" height="6" fill="#111" stroke="#e0e0e0" stroke-width="1"/><rect x="1.500" y="1.500" width="6" height="6" fill="#fff" stroke="#e0e0e0" stroke-width="1"/></svg>
 <svg class="abs" style="left:19.500px;top:20.500px" width="10" height="11" viewBox="0 0 12 13"><path d="M2,3.500 C6,3 8,5 8,9 M2,3.500 L4.500,1 M2,3.500 L4.500,6 M8,10.500 L5.500,8 M8,10.500 L10.500,8" fill="none" stroke="#dcdcdc" stroke-width="1.400"/></svg>
 <!-- fill stroke -->
 <div class="abs" style="left:13px;top:44px;width:15px;height:14px;background:#fff"></div>
 <div class="abs" style="left:17px;top:48px;width:7px;height:6px;background:#474747"></div>
 <svg class="abs" style="left:13px;top:44px" width="15" height="14" viewBox="0 0 15 14"><path d="M0,14 L15,0" stroke="#d8202a" stroke-width="1.800"/></svg>
 <div class="abs" style="left:5px;top:35px;width:15px;height:15px;background:#2d4763;border:1px solid #b8c4cc;box-shadow:0 0 0 1px #3a3a3a"></div>
 <!-- cube + swatch -->
 <svg class="abs" style="left:8px;top:69.500px" width="10.500" height="11" viewBox="0 0 13 14"><path d="M6.500,1 L12,3.800 L12,10 L6.500,13 L1,10 L1,3.800 Z" fill="#9a9a9a" stroke="#e0e0e0" stroke-width="1"/><path d="M1,3.800 L6.500,6.800 L12,3.800 M6.500,6.800 L6.500,13" fill="none" stroke="#e0e0e0" stroke-width="1"/></svg>
 <div class="abs" style="left:23.500px;top:69px;width:11px;height:11px;background:#2c2f86;border:1px solid #c4c4e4;box-shadow:0 0 0 0.500px #3a3a3a"></div>
 <!-- sliders -->
 <span class="lbl" style="left:41px;top:24px">C</span>
 <span class="lbl" style="left:41px;top:44px">M</span>
 <span class="lbl" style="left:41px;top:63px">Y</span>
 <span class="lbl" style="left:41px;top:83px">K</span>
 <div class="sl" style="top:27px;background:linear-gradient(90deg,#d46a6a,#b86870 30%,#5a6078 60%,#1e4a5a 85%,#1a4050)"></div>
 <div class="sl" style="top:47px;background:linear-gradient(90deg,#2a947c,#2a7a78 30%,#2c4a70 55%,#3a1c5c 80%,#2a1044)"></div>
 <div class="sl" style="top:66.500px;background:linear-gradient(90deg,#2e4a84,#2c4a74 40%,#2a4a48 75%,#2a4a28)"></div>
 <div class="sl" style="top:86.500px;background:linear-gradient(90deg,#3c5c80,#2c4660 35%,#101820 75%,#000)"></div>
 <svg class="th" style="left:113.500px;top:31px" viewBox="0 0 9 7"><path d="M4.500,0.500 L8.300,4.500 L8.300,6.500 L0.700,6.500 L0.700,4.500 Z" fill="#f4f4f4" stroke="#222" stroke-width="0.800"/></svg>
 <svg class="th" style="left:90px;top:51px" viewBox="0 0 9 7"><path d="M4.500,0.500 L8.300,4.500 L8.300,6.500 L0.700,6.500 L0.700,4.500 Z" fill="#f4f4f4" stroke="#222" stroke-width="0.800"/></svg>
 <svg class="th" style="left:80.500px;top:70.500px" viewBox="0 0 9 7"><path d="M4.500,0.500 L8.300,4.500 L8.300,6.500 L0.700,6.500 L0.700,4.500 Z" fill="#f4f4f4" stroke="#222" stroke-width="0.800"/></svg>
 <svg class="th" style="left:74px;top:90.500px" viewBox="0 0 9 7"><path d="M4.500,0.500 L8.300,4.500 L8.300,6.500 L0.700,6.500 L0.700,4.500 Z" fill="#f4f4f4" stroke="#222" stroke-width="0.800"/></svg>
 <div class="vf" style="top:23px"><span>78.15</span></div><span class="pc" style="top:24px">%</span>
 <div class="vf" style="top:43px"><span>49.59</span></div><span class="pc" style="top:44px">%</span>
 <div class="vf" style="top:62px"><span>37.58</span></div><span class="pc" style="top:63px">%</span>
 <div class="vf" style="top:82px"><span>29.18</span></div><span class="pc" style="top:83px">%</span>
 <!-- none black white -->
 <div class="abs" style="left:4px;top:105.500px;width:10.500px;height:10.500px;background:#fff"></div>
 <svg class="abs" style="left:4px;top:105.500px" width="10.500" height="10.500" viewBox="0 0 10.500 10.500"><path d="M0,10.500 L10.500,0" stroke="#d8202a" stroke-width="1.400"/></svg>
 <div class="abs" style="left:14.500px;top:105.500px;width:10.500px;height:10.500px;background:#000"></div>
 <div class="abs" style="left:25px;top:105.500px;width:10.500px;height:10.500px;background:#fff"></div>
 <!-- spectrum -->
 <div class="abs" style="left:5px;top:124px;width:171px;height:84px;border:1px solid #2a2a2a;background:linear-gradient(180deg,#fff 0%,rgba(255,255,255,0.820) 10%,rgba(255,255,255,0.400) 24%,rgba(255,255,255,0) 40%,rgba(0,0,0,0) 62%,rgba(0,0,0,0.450) 78%,rgba(0,0,0,0.850) 92%,#000 100%),linear-gradient(90deg,#e8201c 0%,#f08a18 8%,#f6ee1c 16%,#8cc830 24%,#189a3a 34%,#14a070 43%,#1ca4c8 53%,#2060b0 60%,#1c1c8c 68%,#6c1c8c 76%,#e0188c 86%,#e8184c 94%,#e8201c 100%)"></div>
</div>
<!-- layers panel -->
<div class="panel" style="top:225px;height:160px">
 <div class="abs" style="left:0;top:0;width:185px;height:15px;background:#353535"></div>
 <div class="tab" style="left:6px">色板</div>
 <div class="tab" style="left:36px">画笔</div>
 <div class="tab on" style="left:61px;width:30px;padding-left:5.500px">图层</div>
 <div class="tab" style="left:97px">路径查找器</div>
 <svg class="abs" style="left:173px;top:4px" width="12" height="9" viewBox="0 0 12 9"><path d="M0,2 L4,2 L2,4.500 Z" fill="#d0d0d0"/><path d="M5,1 H12 M5,3.500 H12 M5,6 H12" stroke="#b0b0b0" stroke-width="1.200"/></svg>
 <div class="abs" style="left:3px;top:18px;width:181px;height:124px;border:1px solid #2e2e2e;background:#474747"></div>
 <div class="abs" style="left:4px;top:19px;width:179px;height:17px;background:#5d6a80"></div>
 <div class="abs" style="left:20.500px;top:19px;width:1px;height:17px;background:#414b5c"></div>
 <div class="abs" style="left:36.500px;top:19px;width:1px;height:17px;background:#414b5c"></div>
 <div class="abs" style="left:156.500px;top:19px;width:1px;height:17px;background:#414b5c"></div>
 <svg class="abs" style="left:6px;top:22px" width="13" height="10" viewBox="0 0 13 10"><path d="M0.500,5 C3,1 10,1 12.500,5 C10,9 3,9 0.500,5 Z" fill="#f0f0f0"/><circle cx="6.500" cy="5" r="2.300" fill="#333"/></svg>
 <div class="abs" style="left:38.500px;top:19px;width:3px;height:17px;background:#4f7df5"></div>
 <svg class="abs" style="left:46px;top:23px" width="7" height="9" viewBox="0 0 7 9"><path d="M1,0.500 L6.500,4.500 L1,8.500 Z" fill="#f0f0f0"/></svg>
 <div class="abs" style="left:60px;top:21px;width:13px;height:13px;background:#fff;border:1px solid #2e2e2e"><div class="abs" style="left:4px;top:1px;width:3px;height:5px;background:#c8a078"></div><div class="abs" style="left:3.500px;top:5px;width:4px;height:6px;background:#8cc8cc"></div></div>
 <span class="abs" style="left:78px;top:20px;font-size:9.800px;line-height:15px;color:#f4f4f4;letter-spacing:0.3px">图层 1</span>
 <svg class="abs" style="left:160px;top:22px" width="11" height="11" viewBox="0 0 11 11"><circle cx="5.500" cy="5.500" r="4" fill="none" stroke="#e8e8e8" stroke-width="1.100"/><circle cx="5.500" cy="5.500" r="1.500" fill="#e8e8e8"/></svg>
 <div class="abs" style="left:172.500px;top:24.500px;width:6px;height:6px;background:#2c50d8;border:1px solid #a8c0ff"></div>
 <svg class="abs" style="left:178px;top:19px" width="6" height="6" viewBox="0 0 6 6"><path d="M0,0 L6,0 L6,6 Z" fill="#e8e8e8"/></svg>
 <span class="abs" style="left:5px;top:144px;font-size:9.800px;line-height:15px;color:#dcdcdc;letter-spacing:0.5px">1 个图层</span>
 <svg class="abs" style="left:74px;top:145px" width="110" height="14" viewBox="0 0 110 14">
  <circle cx="9" cy="5.500" r="3.600" fill="none" stroke="#e0e0e0" stroke-width="1.400"/><path d="M6.500,8.500 L3,12" stroke="#e0e0e0" stroke-width="1.700"/>
  <rect x="23.500" y="2.500" width="8" height="8" fill="#8a8a8a" stroke="#e0e0e0" stroke-width="1"/><rect x="27.500" y="6.500" width="6" height="6" fill="#474747" stroke="#e0e0e0" stroke-width="1"/>
  <path d="M44,4 L48,4 L46,7 Z M49,5 H53" fill="#e0e0e0" stroke="#e0e0e0" stroke-width="1"/><rect x="50" y="6.500" width="6" height="5" fill="#e0e0e0"/>
  <path d="M66,3 H75 V12 H69 V9 H66 Z" fill="#e0e0e0"/><rect x="64.500" y="9" width="3.500" height="3.500" fill="#e0e0e0"/>
  <path d="M86,5 H95 M87.500,5 L88,12.500 H93 L93.500,5 M89,3.500 H92" fill="none" stroke="#6a6a6a" stroke-width="1.100"/>
 </svg>
</div>
<!-- transparency panel -->
<div class="panel" style="top:387px;height:91px">
 <div class="abs" style="left:0;top:0;width:185px;height:14px;background:#353535"></div>
 <div class="tab on" style="left:0;width:48px;padding-left:11px;height:14px;line-height:16px">透明度</div>
 <svg class="abs" style="left:3px;top:2px" width="6" height="10" viewBox="0 0 6 10"><path d="M0.500,4 L3,1 L5.500,4 Z M0.500,6 L3,9 L5.500,6 Z" fill="#e8e8e8"/></svg>
 <svg class="abs" style="left:173px;top:3px" width="12" height="9" viewBox="0 0 12 9"><path d="M0,2 L4,2 L2,4.500 Z" fill="#d0d0d0"/><path d="M5,1 H12 M5,3.500 H12 M5,6 H12" stroke="#b0b0b0" stroke-width="1.200"/></svg>
 <div class="abs" style="left:5px;top:18px;width:58px;height:14px;background:#3a3a3a;border:1px solid #2e2e2e;font-size:9.500px;line-height:12px;color:#e0e0e0;padding-left:3px">正常</div>
 <svg class="abs" style="left:54px;top:23px" width="7" height="5" viewBox="0 0 7 5"><path d="M0.500,0.500 L6.500,0.500 L3.500,4.500 Z" fill="#e0e0e0"/></svg>
 <span class="abs" style="left:68px;top:18px;font-size:9.500px;line-height:14px;color:#dcdcdc;white-space:nowrap">不透明度 :</span>
 <div class="abs" style="left:126px;top:18px;width:41px;height:14px;background:#b4b4b4;border:1px solid #2e2e2e;font-size:9.500px;line-height:12px;color:#222;padding-left:3px">100%</div>
 <svg class="abs" style="left:168px;top:18px" width="11" height="14" viewBox="0 0 11 14"><rect width="11" height="14" fill="#5a5a5a"/><path d="M3.500,3.500 L8,7 L3.500,10.500 Z" fill="#f0f0f0"/></svg>
 <div class="abs" style="left:6px;top:49px;width:39px;height:39px;background:#fff;border:1px solid #2e2e2e"><svg width="37" height="37" viewBox="0 0 37 37" style="display:block"><path d="M1.500,14.500 C6,12 31,12 35.500,14.500 C34,20 26,23 18.500,23 C11,23 3,20 1.500,14.500 Z" fill="#2c3e58"/></svg></div>
 <svg class="abs" style="left:52px;top:50px" width="10" height="6" viewBox="0 0 10 6"><circle cx="2" cy="3" r="1.300" fill="#e0e0e0"/><circle cx="8" cy="3" r="1.300" fill="#e0e0e0"/></svg>
 <div class="abs" style="left:66.500px;top:48px;width:41px;height:40px;border:1px solid #a4a4a4;background:#474747"><svg width="39" height="38" viewBox="0 0 39 38" style="display:block"><circle cx="19.500" cy="22" r="8" fill="none" stroke="#a4a4a4" stroke-width="2.600"/><path d="M14,16.500 L25,27.500" stroke="#a4a4a4" stroke-width="2.600"/></svg></div>
 <div class="abs" style="left:113px;top:48px;width:55px;height:13px;background:#6e6e6e;border:1px solid #2e2e2e;border-radius:2px;font-size:9.500px;line-height:11px;color:#f0f0f0;text-align:center;white-space:nowrap">制作蒙版</div>
 <div class="abs" style="left:113.500px;top:68px;width:8px;height:8px;border:1px solid #6a6a6a;background:#4e4e4e"></div>
 <span class="abs" style="left:126px;top:65px;font-size:9.500px;line-height:14px;color:#8a8a8a;white-space:nowrap">剪切</span>
 <div class="abs" style="left:113.500px;top:82px;width:8px;height:8px;border:1px solid #6a6a6a;background:#4e4e4e"></div>
 <span class="abs" style="left:126px;top:79px;font-size:9.500px;line-height:14px;color:#8a8a8a;white-space:nowrap">反相蒙版</span>
</div>
</div>
<div id="wm" class="abs" style="left:800px;top:420px;width:200px;height:106px;overflow:hidden;pointer-events:none">
<div class="abs" style="left:62px;top:20px;width:126px;height:10px;background:#474747;border-radius:5px 0 0 5px"></div>
<div class="abs" style="left:62px;top:69px;width:98px;height:13px;background:#474747;border-radius:0 6px 6px 0"></div>
<div class="abs" style="left:22px;top:35px;width:130px;height:13px;overflow:hidden"><span class="abs" style="left:0;top:-9px;font-size:21px;line-height:24px;font-weight:bold;color:#f2f2f2;white-space:nowrap;letter-spacing:2.600px;opacity:.88">Bai<span style="letter-spacing:3px"> </span>du经验</span></div>
<div class="abs" style="left:21px;top:63px;width:42px;height:24px;overflow:hidden"><span class="abs" style="left:-44.400px;top:0;font-size:19px;line-height:22px;font-weight:bold;color:#fff;white-space:nowrap;text-shadow:0 0 1px #c8c8c8">jingyan.b</span></div>
<svg class="abs" style="left:0;top:0" width="200" height="106" viewBox="0 0 200 106"><rect x="23" y="30" width="4.500" height="4.500" fill="#e8e8e8"/><path d="M46,35 L49,30 L52,35 Z" fill="#e8e8e8"/><g fill="#d6d6d6"><ellipse cx="49.400" cy="12.500" rx="5.800" ry="7.800"/><ellipse cx="65.500" cy="13" rx="6.500" ry="8"/><ellipse cx="38" cy="25" rx="6.500" ry="8"/></g><path d="M6.500,92 C11,88 16,82 18.300,72" fill="none" stroke="#e8e8e8" stroke-width="1.100"/><path d="M5,93.500 L8.500,90 L9.500,92.500 Z" fill="#fff"/></svg>
</div>
</body>
</html>
